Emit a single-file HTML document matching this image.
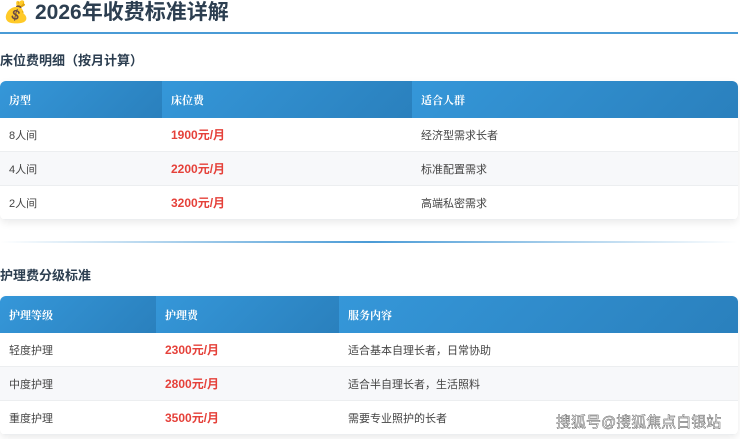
<!DOCTYPE html><html><head><meta charset="utf-8"><style>
body{margin:0;width:740px;height:439px;overflow:hidden;background:#fff;font-family:"Liberation Sans","Noto Sans CJK SC",sans-serif;position:relative}
.t{position:absolute;left:3px;top:-4px;font-size:21px;font-weight:bold;color:#2c3e50;white-space:nowrap}
.line{position:absolute;left:0;top:32px;width:738px;height:2px;background:#4a9bd6}
.st{position:absolute;left:0;font-size:13px;font-weight:bold;color:#2c3e50}
table{position:absolute;left:0;width:738px;border-collapse:collapse;font-size:11px;color:#444;box-shadow:0 3px 8px rgba(0,0,0,.08);border-radius:6px;overflow:hidden}
th{height:37px;background:linear-gradient(135deg,#3597d9,#2a80bd);color:#fff;text-align:left;font-size:11px;padding:0 0 0 9px;font-family:"Liberation Serif","Noto Serif CJK SC",serif;font-weight:bold}
td{height:33px;padding:0 0 0 9px;border-bottom:1px solid #eceef0}
tr:nth-child(odd) td{background:#f7f8fa}
.p{color:#e5413a;font-weight:bold;font-size:12px}
.div{position:absolute;left:0;top:241px;width:738px;height:2px;background:linear-gradient(90deg,rgba(74,155,214,0),#4a9bd6 50%,rgba(74,155,214,0))}
.wm{position:absolute;left:556px;top:411px;font-size:15px;color:#fff;-webkit-text-stroke:0.4px #444;white-space:nowrap}
</style></head><body>
<div class="t">💰 2026年收费标准详解</div>
<div class="line"></div>
<div class="st" style="top:50px">床位费明细（按月计算）</div>
<table style="top:81px"><tr><th style="width:153px">房型</th><th style="width:241px">床位费</th><th>适合人群</th></tr>
<tr><td>8人间</td><td class="p">1900元/月</td><td>经济型需求长者</td></tr>
<tr><td>4人间</td><td class="p">2200元/月</td><td>标准配置需求</td></tr>
<tr><td>2人间</td><td class="p">3200元/月</td><td>高端私密需求</td></tr></table>
<div class="div"></div>
<div class="st" style="top:265px">护理费分级标准</div>
<table style="top:296px"><tr><th style="width:147px">护理等级</th><th style="width:174px">护理费</th><th>服务内容</th></tr>
<tr><td>轻度护理</td><td class="p">2300元/月</td><td>适合基本自理长者，日常协助</td></tr>
<tr><td>中度护理</td><td class="p">2800元/月</td><td>适合半自理长者，生活照料</td></tr>
<tr><td>重度护理</td><td class="p">3500元/月</td><td>需要专业照护的长者</td></tr></table>
<div class="wm">搜狐号@搜狐焦点白银站</div>
</body></html>
